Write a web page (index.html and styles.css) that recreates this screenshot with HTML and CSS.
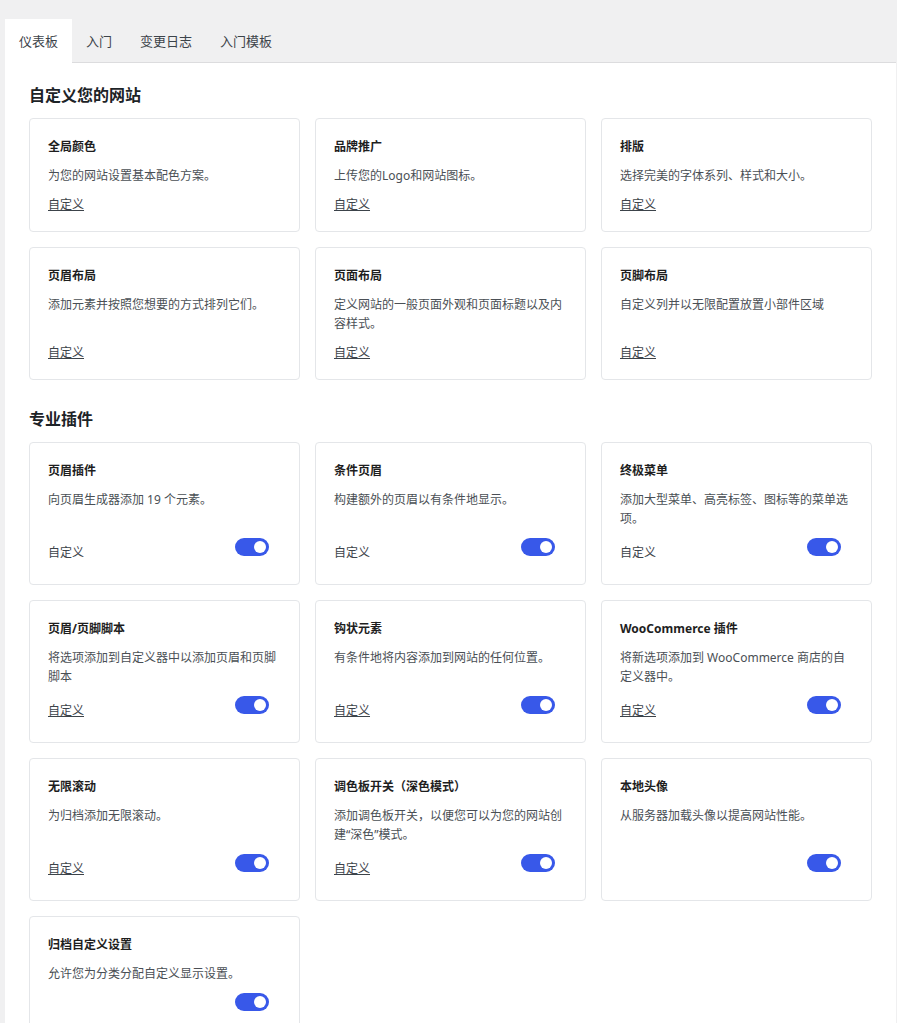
FILE: index.html
```html
<!DOCTYPE html>
<html lang="zh-CN">
<head>
<meta charset="utf-8">
<title>仪表板</title>
<link rel="stylesheet" href="styles.css">
</head>
<body>
<div class="wrap">
  <nav class="tabs">
    <a class="tab active">仪表板</a>
    <a class="tab">入门</a>
    <a class="tab">变更日志</a>
    <a class="tab">入门模板</a>
  </nav>
  <main class="panel">
    <h2 class="section-title">自定义您的网站</h2>
    <div class="grid">
      <div class="card">
        <h3 class="card-title">全局颜色</h3>
        <p class="card-desc">为您的网站设置基本配色方案。</p>
        <a class="card-link">自定义</a>
      </div>
      <div class="card">
        <h3 class="card-title">品牌推广</h3>
        <p class="card-desc">上传您的Logo和网站图标。</p>
        <a class="card-link">自定义</a>
      </div>
      <div class="card">
        <h3 class="card-title">排版</h3>
        <p class="card-desc">选择完美的字体系列、样式和大小。</p>
        <a class="card-link">自定义</a>
      </div>
      <div class="card">
        <h3 class="card-title">页眉布局</h3>
        <p class="card-desc">添加元素并按照您想要的方式排列它们。</p>
        <a class="card-link">自定义</a>
      </div>
      <div class="card">
        <h3 class="card-title">页面布局</h3>
        <p class="card-desc">定义网站的一般页面外观和页面标题以及内容样式。</p>
        <a class="card-link">自定义</a>
      </div>
      <div class="card">
        <h3 class="card-title">页脚布局</h3>
        <p class="card-desc">自定义列并以无限配置放置小部件区域</p>
        <a class="card-link">自定义</a>
      </div>
    </div>

    <h2 class="section-title second">专业插件</h2>
    <div class="grid">
      <div class="card">
        <h3 class="card-title">页眉插件</h3>
        <p class="card-desc">向页眉生成器添加 19 个元素。</p>
        <div class="card-foot"><a class="card-link plain">自定义</a><span class="toggle"></span></div>
      </div>
      <div class="card">
        <h3 class="card-title">条件页眉</h3>
        <p class="card-desc">构建额外的页眉以有条件地显示。</p>
        <div class="card-foot"><a class="card-link plain">自定义</a><span class="toggle"></span></div>
      </div>
      <div class="card">
        <h3 class="card-title">终极菜单</h3>
        <p class="card-desc">添加大型菜单、高亮标签、图标等的菜单选项。</p>
        <div class="card-foot"><a class="card-link plain">自定义</a><span class="toggle"></span></div>
      </div>
      <div class="card">
        <h3 class="card-title">页眉/页脚脚本</h3>
        <p class="card-desc">将选项添加到自定义器中以添加页眉和页脚脚本</p>
        <div class="card-foot"><a class="card-link">自定义</a><span class="toggle"></span></div>
      </div>
      <div class="card">
        <h3 class="card-title">钩状元素</h3>
        <p class="card-desc">有条件地将内容添加到网站的任何位置。</p>
        <div class="card-foot"><a class="card-link">自定义</a><span class="toggle"></span></div>
      </div>
      <div class="card">
        <h3 class="card-title">WooCommerce 插件</h3>
        <p class="card-desc">将新选项添加到 WooCommerce 商店的自定义器中。</p>
        <div class="card-foot"><a class="card-link">自定义</a><span class="toggle"></span></div>
      </div>
      <div class="card">
        <h3 class="card-title">无限滚动</h3>
        <p class="card-desc">为归档添加无限滚动。</p>
        <div class="card-foot"><a class="card-link">自定义</a><span class="toggle"></span></div>
      </div>
      <div class="card">
        <h3 class="card-title">调色板开关（深色模式）</h3>
        <p class="card-desc">添加调色板开关，以便您可以为您的网站创建“深色”模式。</p>
        <div class="card-foot"><a class="card-link">自定义</a><span class="toggle"></span></div>
      </div>
      <div class="card">
        <h3 class="card-title">本地头像</h3>
        <p class="card-desc">从服务器加载头像以提高网站性能。</p>
        <div class="card-foot"><span class="toggle"></span></div>
      </div>
      <div class="card">
        <h3 class="card-title">归档自定义设置</h3>
        <p class="card-desc">允许您为分类分配自定义显示设置。</p>
        <div class="card-foot"><span class="toggle"></span></div>
      </div>
    </div>
  </main>
</div>
</body>
</html>
```

FILE: styles.css
```css
html, body {
  margin: 0;
  padding: 0;
  background: #f0f0f1;
}

body {
  font-family: "Noto Sans", "Noto Sans CJK SC", sans-serif;
  color: #3c434a;
}

.wrap {
  padding: 19px 1px 0 5px;
}

.tabs {
  display: flex;
  border-bottom: 1px solid #dcdcde;
}

.tab {
  display: block;
  font-size: 13px;
  line-height: 20px;
  padding: 12px 14px 11px;
  color: #3c434a;
  cursor: pointer;
}

.tab.active {
  background: #fff;
  margin-bottom: -1px;
  padding-bottom: 12px;
}

.panel {
  background: #fff;
  padding: 20px 24px 24px;
}

.section-title {
  margin: 0 0 11px;
  font-size: 16px;
  line-height: 24px;
  font-weight: 700;
  color: #1d2327;
}

.section-title.second {
  margin-top: 27px;
}

.grid {
  display: grid;
  grid-template-columns: repeat(3, 1fr);
  gap: 15px;
}

.card {
  display: flex;
  flex-direction: column;
  border: 1px solid #e4e6e9;
  border-radius: 4px;
  padding: 18px 19px 16px 18px;
  background: #fff;
}

.card-title {
  margin: 0 0 9px;
  font-size: 12px;
  line-height: 20px;
  font-weight: 700;
  color: #1e1e1e;
}

.card-desc {
  margin: 0 0 10px;
  font-size: 12px;
  line-height: 19px;
  color: #4a4f55;
}

.card-link {
  margin-top: auto;
  font-size: 12px;
  line-height: 20px;
  color: #3c434a;
  text-decoration: underline;
  align-self: flex-start;
  cursor: pointer;
}

.card-link.plain {
  text-decoration: none;
}

.card-foot {
  margin-top: auto;
  display: flex;
  align-items: flex-start;
  justify-content: space-between;
  min-height: 25px;
  padding-bottom: 5px;
}

.card-foot .card-link {
  margin-top: 5px;
}

.toggle {
  position: relative;
  display: block;
  width: 34px;
  height: 18px;
  border-radius: 9px;
  background: #3858e9;
  margin-left: auto;
  margin-right: 11px;
}

.toggle::after {
  content: "";
  position: absolute;
  top: 3px;
  right: 3px;
  width: 12px;
  height: 12px;
  border-radius: 50%;
  background: #fff;
}
```
